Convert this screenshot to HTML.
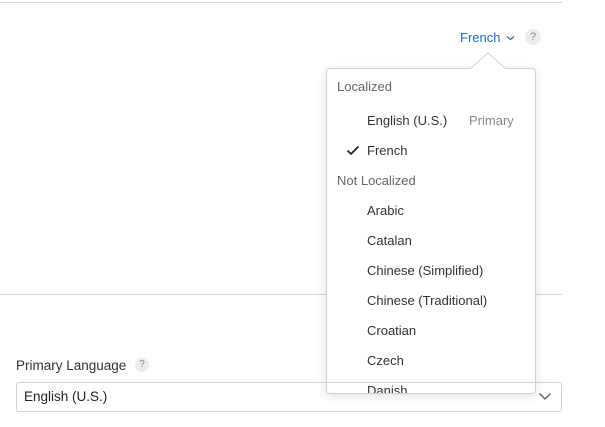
<!DOCTYPE html>
<html><head><style>
*{margin:0;padding:0;box-sizing:border-box}
body{width:605px;height:427px;background:#fff;font-family:"Liberation Sans",sans-serif;position:relative;overflow:hidden;color:#333}
.a{position:absolute;white-space:nowrap}
.hr{position:absolute;left:0;width:562px;height:1px;background:#d6d6d6}
.q{position:absolute;border-radius:50%;background:#ececec;color:#888;text-align:center;font-size:11px}
.pop{position:absolute;left:326px;top:68px;width:210px;height:326px;background:#fff;border:1px solid #d0d0d0;border-radius:4px;box-shadow:0 2px 10px rgba(0,0,0,.12);overflow:hidden}
.pop div{position:absolute;font-size:13px;line-height:16px;color:#333}
.h{left:10px;color:#666!important}
.i{left:40px}
</style></head><body>
<div class="hr" style="top:2px"></div>
<div class="hr" style="top:294px"></div>
<div class="a" style="left:460px;top:30px;font-size:13px;color:#1b6ec2">French</div>
<svg class="a" style="left:506px;top:35px" width="9" height="6"><path d="M1 1.5L4.5 4.5L8 1.5" fill="none" stroke="#1b6ec2" stroke-width="1.2"/></svg>
<div class="q" style="left:525px;top:29px;width:16px;height:16px;line-height:16px">?</div>
<svg class="a" style="left:470px;top:52px;z-index:2" width="36" height="18"><path d="M0 17L18 1L36 17" fill="#fff" stroke="#d0d0d0"/><rect x="0" y="17" width="36" height="2" fill="#fff"/></svg>
<div class="pop">
<div class="h" style="top:10px">Localized</div>
<div class="i" style="top:44px">English (U.S.)</div>
<div style="left:142px;top:44px;color:#888">Primary</div>
<svg style="position:absolute;left:19px;top:76px" width="14" height="11"><path d="M1.5 5.5L5 9L12.5 1.5" fill="none" stroke="#222" stroke-width="1.8"/></svg>
<div class="i" style="top:74px">French</div>
<div class="h" style="top:104px">Not Localized</div>
<div class="i" style="top:134px">Arabic</div>
<div class="i" style="top:164px">Catalan</div>
<div class="i" style="top:194px">Chinese (Simplified)</div>
<div class="i" style="top:224px">Chinese (Traditional)</div>
<div class="i" style="top:254px">Croatian</div>
<div class="i" style="top:284px">Czech</div>
<div class="i" style="top:314px">Danish</div>
</div>
<div class="a" style="left:16px;top:358px;font-size:13.5px;color:#333">Primary Language</div>
<div class="q" style="left:135px;top:358px;width:14px;height:14px;line-height:14px;font-size:10px">?</div>
<div class="a" style="left:16px;top:382px;width:546px;height:30px;border:1px solid #d0d0d0;border-radius:3px"></div>
<div class="a" style="left:24px;top:389px;font-size:13.5px;color:#222">English (U.S.)</div>
<svg class="a" style="left:538px;top:392px" width="14" height="9"><path d="M1.5 1.5L7 7L12.5 1.5" fill="none" stroke="#555" stroke-width="1.3"/></svg>
</body></html>
